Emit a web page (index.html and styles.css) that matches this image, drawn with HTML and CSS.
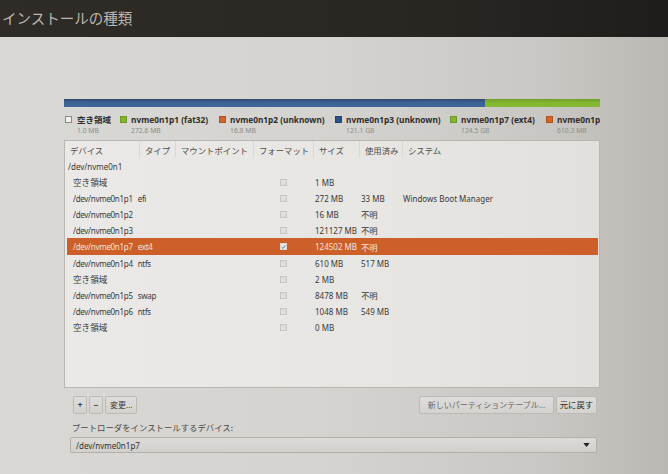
FILE: index.html
```html
<!DOCTYPE html>
<html lang="ja">
<head>
<meta charset="utf-8">
<title>インストールの種類</title>
<link rel="stylesheet" href="styles.css">
</head>
<body>
<div class="titlebar">インストールの種類</div>
<div class="content">
  <div class="pbar">
    <div class="seg seg-blue"></div>
    <div class="seg seg-green"></div>
  </div>
  <div class="legend">
    <div class="litem w1"><span class="sw sw-free"></span><div class="ltext"><div class="lname cjk">空き領域</div><div class="lsize">1.0 MB</div></div></div>
    <div class="litem w2"><span class="sw sw-green"></span><div class="ltext"><div class="lname">nvme0n1p1 (fat32)</div><div class="lsize">272.6 MB</div></div></div>
    <div class="litem w3"><span class="sw sw-orange"></span><div class="ltext"><div class="lname">nvme0n1p2 (unknown)</div><div class="lsize">16.8 MB</div></div></div>
    <div class="litem w4"><span class="sw sw-blue"></span><div class="ltext"><div class="lname">nvme0n1p3 (unknown)</div><div class="lsize">121.1 GB</div></div></div>
    <div class="litem w5"><span class="sw sw-green"></span><div class="ltext"><div class="lname">nvme0n1p7 (ext4)</div><div class="lsize">124.5 GB</div></div></div>
    <div class="litem w6"><span class="sw sw-orange"></span><div class="ltext"><div class="lname">nvme0n1p4</div><div class="lsize">610.3 MB</div></div></div>
  </div>

  <div class="tablebox">
    <div class="thead">
      <div class="th c1">デバイス</div>
      <div class="th c2">タイプ</div>
      <div class="th c3">マウントポイント</div>
      <div class="th c4">フォーマット</div>
      <div class="th c5">サイズ</div>
      <div class="th c6">使用済み</div>
      <div class="th c7">システム</div>
    </div>
    <div class="rows">
      <div class="row parent"><div class="dev">/dev/nvme0n1</div></div>
      <div class="row"><div class="dev cjk">空き領域</div><div class="chk"><span class="cb"></span></div><div class="size">1 MB</div><div class="used"></div><div class="sys"></div></div>
      <div class="row"><div class="dev">/dev/nvme0n1p1<span class="type">efi</span></div><div class="chk"><span class="cb"></span></div><div class="size">272 MB</div><div class="used">33 MB</div><div class="sys">Windows Boot Manager</div></div>
      <div class="row"><div class="dev">/dev/nvme0n1p2</div><div class="chk"><span class="cb"></span></div><div class="size">16 MB</div><div class="used cjk">不明</div><div class="sys"></div></div>
      <div class="row"><div class="dev">/dev/nvme0n1p3</div><div class="chk"><span class="cb"></span></div><div class="size">121127 MB</div><div class="used cjk">不明</div><div class="sys"></div></div>
      <div class="row selected"><div class="dev">/dev/nvme0n1p7<span class="type">ext4</span></div><div class="chk"><span class="cb checked"><svg viewBox="0 0 8 8" width="6" height="6"><path d="M1 4.2 L3.2 6.3 L7 1.5" fill="none" stroke="#5a6a80" stroke-width="1.4"/></svg></span></div><div class="size">124502 MB</div><div class="used cjk">不明</div><div class="sys"></div></div>
      <div class="row"><div class="dev">/dev/nvme0n1p4<span class="type">ntfs</span></div><div class="chk"><span class="cb"></span></div><div class="size">610 MB</div><div class="used">517 MB</div><div class="sys"></div></div>
      <div class="row"><div class="dev cjk">空き領域</div><div class="chk"><span class="cb"></span></div><div class="size">2 MB</div><div class="used"></div><div class="sys"></div></div>
      <div class="row"><div class="dev">/dev/nvme0n1p5<span class="type">swap</span></div><div class="chk"><span class="cb"></span></div><div class="size">8478 MB</div><div class="used cjk">不明</div><div class="sys"></div></div>
      <div class="row"><div class="dev">/dev/nvme0n1p6<span class="type">ntfs</span></div><div class="chk"><span class="cb"></span></div><div class="size">1048 MB</div><div class="used">549 MB</div><div class="sys"></div></div>
      <div class="row"><div class="dev cjk">空き領域</div><div class="chk"><span class="cb"></span></div><div class="size">0 MB</div><div class="used"></div><div class="sys"></div></div>
    </div>
  </div>

  <div class="bottom">
    <div class="toolbar">
      <div class="btngroup">
        <button class="btn sq">+</button>
        <button class="btn sq">−</button>
        <button class="btn cjk">変更...</button>
      </div>
      <div class="btngroup">
        <button class="btn wide cjk">新しいパーティションテーブル...</button>
        <button class="btn dark cjk">元に戻す</button>
      </div>
    </div>
    <div class="bl-label">ブートローダをインストールするデバイス:</div>
    <div class="combo">
      <span>/dev/nvme0n1p7</span>
      <svg class="arrow" viewBox="0 0 8 5" width="7" height="4"><path d="M0 0 L8 0 L4 5 Z" fill="#222"/></svg>
    </div>
  </div>
</div>
</body>
</html>
```

FILE: styles.css
```css
* { box-sizing: border-box; }
html, body {
  margin: 0;
  padding: 0;
}
body {
  width: 668px;
  height: 474px;
  overflow: hidden;
  font-family: "Noto Sans", "Noto Sans CJK JP", sans-serif;
  font-size: 8px;
  color: #3c3b39;
  background: linear-gradient(to right, #d9d8d5 0%, #d4d3cf 50%, #c9c7c3 82%, #bbb8b3 100%);
}
.cjk { font-family: "Noto Sans CJK JP", "Noto Sans", sans-serif; }

.titlebar {
  height: 37px;
  line-height: 36px;
  padding-left: 2px;
  font-family: "Noto Sans CJK JP", sans-serif;
  font-size: 14.5px;
  color: #bcb8b2;
  background: linear-gradient(to right, #2f2c28 0%, #2a2723 60%, #1f1d1b 100%);
}

.content {
  padding: 62px 68px 0 64px;
}

.pbar {
  display: flex;
  height: 8px;
}
.seg { height: 100%; }
.seg-blue {
  width: 423px;
  background: linear-gradient(to bottom, #2d4a70 0%, #3c6192 40%, #3f6798 100%);
}
.seg-green {
  width: 115px;
  background: linear-gradient(to bottom, #6f9f25 0%, #84b832 50%, #86ba34 100%);
}

.legend {
  display: flex;
  margin-top: 7px;
  height: 24px;
  width: 536px;
  overflow: hidden;
}
.litem {
  display: flex;
  align-items: flex-start;
  flex-shrink: 0;
  gap: 4px;
}
.w1 { width: 56px; gap: 5px; padding-left: 1px; }
.w2 { width: 99px; }
.w3 { width: 116px; }
.w4 { width: 115px; }
.w5 { width: 96px; }
.w6 { width: 54px; }
.sw {
  width: 7px;
  height: 7px;
  margin-top: 2px;
  flex-shrink: 0;
}
.sw-free { background: #f2f1ef; border: 1px solid #8c8a86; }
.sw-green { background: #83b431; border: 1px solid #6c9a22; }
.sw-orange { background: #d2652c; border: 1px solid #b4521e; }
.sw-blue { background: #2f5286; border: 1px solid #244270; }
.ltext { display: flex; flex-direction: column; flex-shrink: 0; }
.lname {
  font-weight: bold;
  font-size: 8.3px;
  line-height: 11px;
  color: #2e2d2b;
  white-space: nowrap;
}
.lname.cjk { font-size: 8.5px; }
.lsize {
  font-size: 6.8px;
  line-height: 11px;
  color: #8e8c88;
  white-space: nowrap;
}

.tablebox {
  margin-top: 2px;
  width: 536px;
  height: 248px;
  border: 1px solid #b8b6b1;
  background: linear-gradient(to right, #eae9e7 0%, #e7e6e3 60%, #e1e0dc 100%);
}
.thead {
  display: flex;
  height: 17px;
  align-items: stretch;
}
.th {
  display: flex;
  align-items: center;
  padding-left: 5px;
  font-family: "Noto Sans CJK JP", sans-serif;
  font-size: 8.4px;
  color: #4f4d4a;
  border-right: 1px solid #d9d8d5;
  white-space: nowrap;
}
.c1 { width: 75px; }
.c2 { width: 36px; }
.c3 { width: 78px; }
.c4 { width: 60px; }
.c5 { width: 46px; }
.c6 { width: 43px; }
.c7 { flex: 1; border-right: none; }

.rows { padding: 0 1px 0 2px; }
.row {
  display: grid;
  grid-template-columns: 211px 37px 46px 42px 1fr;
  height: 16px;
  align-items: center;
  color: #3a3937;
  white-space: nowrap;
}
.dev { padding-left: 6px; letter-spacing: -0.3px; }
.parent .dev { padding-left: 1px; letter-spacing: 0; }
.dev.cjk { font-size: 8.6px; letter-spacing: 0; }
.type { margin-left: 5px; }
.chk { padding-left: 2px; display: flex; align-items: center; }
.cb {
  width: 7px;
  height: 7px;
  border: 1px solid #c6c5c1;
  background: #dfdedb;
  display: inline-flex;
  align-items: center;
  justify-content: center;
}
.cb.checked {
  background: #e8e6ea;
  border-color: #e2d6d0;
}
.used.cjk { font-size: 8.4px; }
.selected {
  background: #cd5f28;
  color: #f3e3da;
  height: 17px;
}

.bottom {
  padding: 0 3px 0 6px;
}
.toolbar {
  display: flex;
  justify-content: space-between;
  margin-top: 8px;
  height: 18px;
}
.btngroup { display: flex; gap: 2px; }
.btn {
  height: 18px;
  padding: 0 4px;
  border: 1px solid #bcbab5;
  border-radius: 2px;
  background: linear-gradient(to bottom, #dedddb, #d3d2cf);
  font-family: "Noto Sans", "Noto Sans CJK JP", sans-serif;
  font-size: 8px;
  color: #3a3937;
  line-height: 16px;
}
.btn.sq { width: 14px; padding: 0; font-weight: bold; }
.btngroup:first-child { padding-left: 3px; }
.btn.wide { width: 135px; color: #6a6865; }
.btn.dark { width: 41px; padding: 0; font-size: 8.4px; color: #2a2927; }

.bl-label {
  margin-top: 6px;
  height: 14px;
  line-height: 14px;
  padding-left: 2px;
  font-family: "Noto Sans CJK JP", sans-serif;
  font-size: 8.4px;
  color: #4a4946;
}
.combo {
  margin-top: 3px;
  height: 16px;
  width: 527px;
  display: flex;
  align-items: center;
  justify-content: space-between;
  padding: 0 6px 0 5px;
  border: 1px solid #b2b0ab;
  border-radius: 2px;
  background: linear-gradient(to bottom, #dcdbd8, #d1d0cc);
  color: #33322f;
}
.arrow { display: block; }
```
